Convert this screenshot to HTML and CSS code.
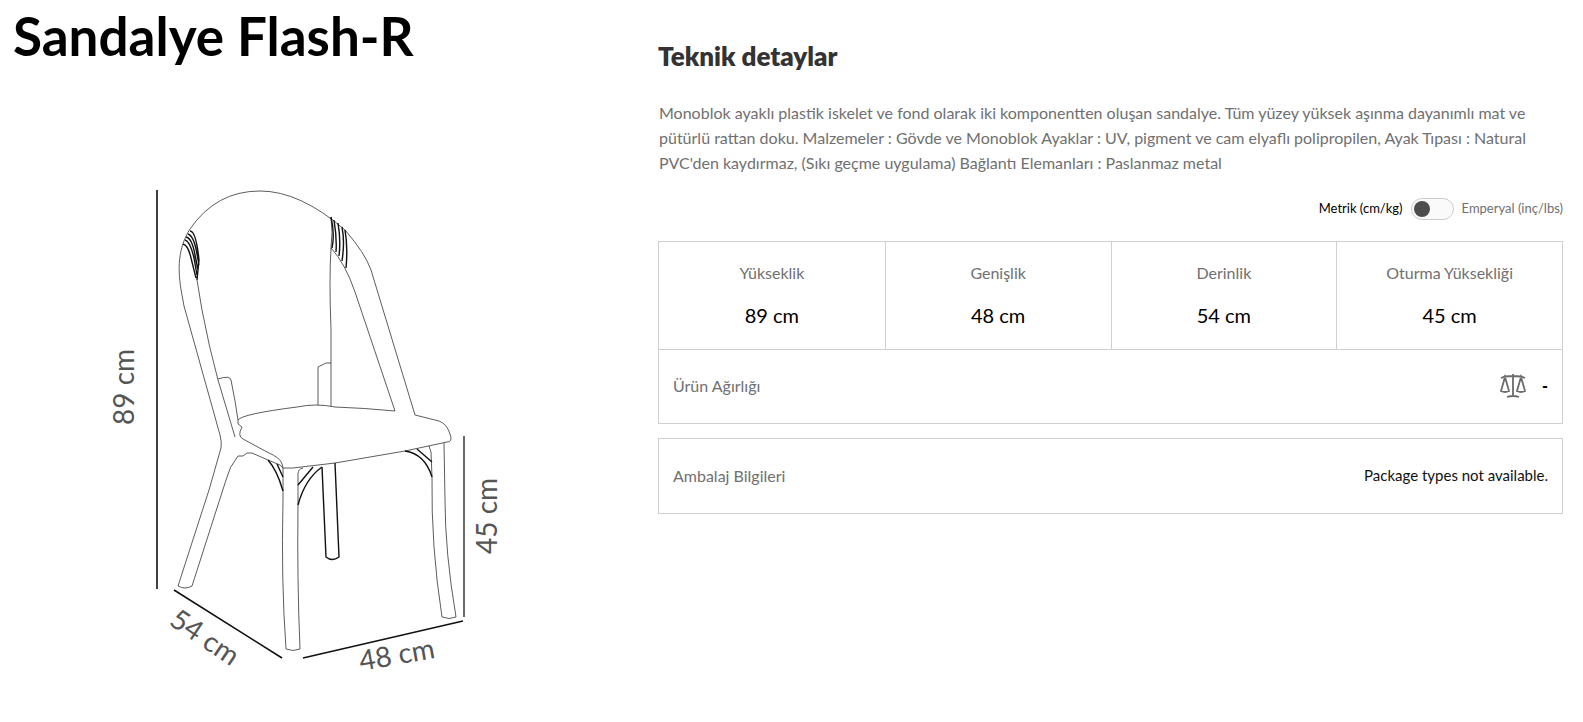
FILE: index.html
```html
<!DOCTYPE html>
<html lang="tr">
<head>
<meta charset="utf-8">
<meta name="viewport" content="width=device-width, initial-scale=1">
<title>Sandalye Flash-R</title>
<link rel="stylesheet" href="styles.css">
</head>
<body>
<main class="product">
  <section class="overview">
    <h1 class="product-title">Sandalye Flash-R</h1>
    <svg class="drawing" viewBox="13 90 645 600" role="img" aria-label="Sandalye ölçüleri">
      <g class="thin">
        <!-- backrest -->
        <path d="M415 415L371 270Q365 253 345 230Q300 191 260 191Q216 191 190 229C178 248 177 269 182 295L184 306L220 435Q222 442 221 448L209 490L178 586Q185 590 192 586L226 480Q229 467 238 456H243L247 453H252L268 460L280 465L283 468"/>
        <path d="M331 217Q333 232 331 248Q329 280 331 330V363H326L318 367V405M331 363V406"/>
        <path d="M331 248Q345 263 355 292L395 411Q364 408 335 407Q316 403 297 407Q242 414 238 420V424L242 427Q237 436 243 439L267 452Q281 458 282 464L283 468L293 468L335 463L405 451L447 442Q453 442 450 434Q447 424 439 421L415 415"/>
        <path d="M197 280L202 310Q209 347 218 380L235 437M218 379Q230 375 231 380L235 401L238 420"/>
        <!-- front legs -->
        <path d="M283 468V500Q281 580 286 649Q293 652 300 649Q297 580 298 503V474Q298 469 303 468"/>
        <path d="M429 446L431 452L432 477Q431 547 442 617Q449 620 456 617Q445 552 445 500L444 443"/>
      </g>
      <g class="medium">
        <path d="M322 467L326 557Q332 562 339 557L335 463"/>
        <path d="M268 460Q277 470 283 491M277 464L283 477M298 485L313 467M298 505Q305 479 322 467M405 451Q425 454 432 477M417 449L432 462"/>
        <!-- woven corners -->
        <path d="M183 244Q188 245 191 258L196 278M185 240Q190 241 194 258L197 275M186 237Q192 238 195 255L198 270M188 234Q194 236 197 254L199 265M190 231Q196 231 199 260L197 280"/>
        <path d="M331 217Q335 234 332 248M334 220Q337 238 336 252M338 223Q341 240 339 256M342 227Q345 242 342 261M345 230Q348 247 346 268"/>
      </g>
      <g class="measure">
        <path d="M157 190V589M174 590L282 658M303 658L463 621"/>
        <path class="soft" d="M464 436V617"/>
      </g>
      <g class="label">
        <text transform="translate(134 425) rotate(-90)">89 cm</text>
        <text transform="translate(497 554) rotate(-90)">45 cm</text>
        <text transform="translate(168 624) rotate(34)">54 cm</text>
        <text transform="translate(361 671) rotate(-10)">48 cm</text>
      </g>
    </svg>
  </section>

  <section class="details">
    <h2 class="details-title">Teknik detaylar</h2>
    <p class="description">Monoblok ayaklı plastik iskelet ve fond olarak iki komponentten oluşan sandalye. Tüm yüzey yüksek aşınma dayanımlı mat ve pütürlü rattan doku. Malzemeler : Gövde ve Monoblok Ayaklar : UV, pigment ve cam elyaflı polipropilen, Ayak Tıpası : Natural PVC'den kaydırmaz, (Sıkı geçme uygulama) Bağlantı Elemanları : Paslanmaz metal</p>
    <div class="units">
      <label class="unit-active" for="unit">Metrik (cm/kg)</label>
      <input class="switch" type="checkbox" role="switch" id="unit">
      <label for="unit">Emperyal (inç/lbs)</label>
    </div>
    <div class="panel">
      <table class="dimensions">
        <thead><tr><th scope="col">Yükseklik</th><th scope="col">Genişlik</th><th scope="col">Derinlik</th><th scope="col">Oturma Yüksekliği</th></tr></thead>
        <tbody><tr><td>89 cm</td><td>48 cm</td><td>54 cm</td><td>45 cm</td></tr></tbody>
      </table>
      <div class="row weight">
        <span>Ürün Ağırlığı</span>
        <span class="row-value">
          <svg class="scale" viewBox="0 0 26 24" aria-hidden="true"><path d="M13 0V22M7 23Q13 21 19 23M1 4Q5 2 13 2Q21 2 25 4M5 3L1 17Q5 19 9 17ZM21 3L17 17Q21 19 25 17Z"/></svg>
          <strong>-</strong>
        </span>
      </div>
    </div>
    <div class="panel row">
      <span>Ambalaj Bilgileri</span>
      <span class="package">Package types not available.</span>
    </div>
  </section>
</main>
</body>
</html>
```
FILE: styles.css
```css
* { box-sizing: border-box; }
body {
  margin: 0;
  background: #fff;
  color: #707070;
  font: 16px/25px Lato, "Open Sans", sans-serif;
}
.product {
  display: grid;
  grid-template-columns: 645fr 905fr;
  padding: 0 20px 0 13px;
}
.product-title {
  margin: 0;
  padding-top: 6px;
  color: #000;
  font-size: 53px;
  line-height: 60px;
  font-weight: 700;
}
.drawing {
  display: block;
  width: 100%;
  margin-top: 24px;
  fill: none;
}
.thin { stroke: #333; stroke-width: 0.8; }
.medium { stroke: #111; stroke-width: 1.4; }
.measure { stroke: #111; stroke-width: 1.6; }
.soft { stroke: #444; }
.label { fill: #555; font-size: 28px; }

.details { padding-top: 40px; }
.details-title {
  margin: 0 0 28px;
  color: #333;
  font-size: 26px;
  line-height: 32px;
  font-weight: 800;
}
.description { margin: 0 0 21px; padding-left: 1px; }
.units {
  display: flex;
  align-items: center;
  justify-content: flex-end;
  gap: 8px;
  height: 25px;
  margin-bottom: 20px;
  font-size: 13px;
}
.unit-active { color: #000; }
.switch {
  appearance: none;
  display: flex;
  align-items: center;
  width: 43px;
  height: 22px;
  margin: 0;
  padding: 0 2px;
  border: 1px solid #ccc;
  border-radius: 11px;
  background: #fafafa;
}
.switch::before {
  content: "";
  width: 16px;
  height: 16px;
  border-radius: 50%;
  background: #4d4d4d;
}
.switch:checked { justify-content: flex-end; }
.panel { border: 1px solid #d0d0d0; }
.panel + .panel { margin-top: 14px; }
.dimensions {
  width: 100%;
  table-layout: fixed;
  border-collapse: separate;
  border-spacing: 0;
  text-align: center;
}
.dimensions th { padding: 18px 0 0; font-weight: 400; }
.dimensions td {
  padding: 15px 0 19px;
  color: #000;
  font-size: 20px;
  line-height: 30px;
}
.dimensions th + th, .dimensions td + td { border-left: 1px solid #d0d0d0; }
.row {
  display: flex;
  align-items: center;
  justify-content: space-between;
  padding: 24px 14px 25px;
}
.weight { border-top: 1px solid #d0d0d0; padding: 23px 14px 25px; }
.row-value {
  display: flex;
  align-items: center;
  gap: 16px;
  color: #000;
}
.row-value strong { font-weight: 900; }
.scale {
  width: 26px;
  height: 24px;
  fill: none;
  stroke: #6b6b6b;
  stroke-width: 1.8;
}
.package { color: #111; font-size: 15px; }
```
